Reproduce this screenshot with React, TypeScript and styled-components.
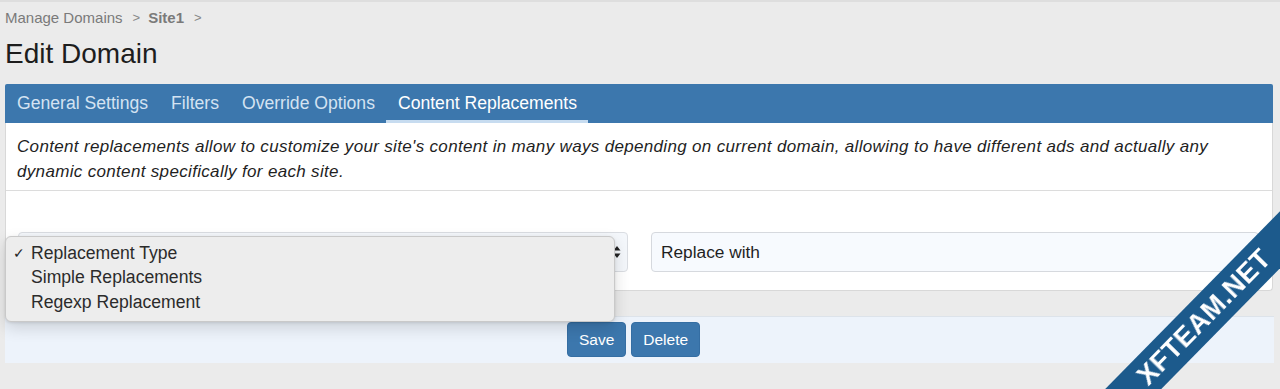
import React from 'react';
import styled, { createGlobalStyle } from 'styled-components';

const GlobalStyle = createGlobalStyle`
    html, body {
        margin: 0;
        padding: 0;
        background: #ebebeb;
        font-family: 'Liberation Sans', Arial, sans-serif;
        overflow: hidden;
    }
`;

/** Styled Components */
const Page = styled.div`
    border-top: 2px solid #dedede;
    padding: 0 7px 0 5px;
    height: 387px;
`;

const Breadcrumb = styled.div`
    display: flex;
    align-items: center;
    gap: 8px;
    padding-top: 5px;
    height: 20px;
    font-size: 15px;
    color: #7a7a7a;
`;

const Crumb = styled.span<{ $bold?: boolean }>`
    font-weight: ${(props) => (props.$bold ? 700 : 400)};
`;

const Chevron = styled.span`
    font-size: 13px;
    color: #888;
    padding-left: 2px;
`;

const Title = styled.h1`
    margin: 0;
    padding: 11px 0 15px;
    font-size: 28px;
    line-height: 31px;
    font-weight: 400;
    color: #1d1d1d;
`;

const TabBar = styled.div`
    display: flex;
    align-items: stretch;
    height: 39px;
    background: #3c77ad;
    border-radius: 2px 2px 0 0;
`;

const Tab = styled.div<{ $active?: boolean }>`
    display: flex;
    align-items: center;
    padding: 2px 11.5px 0;
    font-size: 17.6px;
    color: ${(props) => (props.$active ? '#ffffff' : '#d4e3f2')};
    border-bottom: 3px solid
        ${(props) => (props.$active ? '#c7dcf0' : 'transparent')};

    &:first-child {
        padding-left: 12px;
    }
`;

const Panel = styled.div`
    background: #fff;
    border: 1px solid #d8d8d8;
    border-top: none;
    border-radius: 0 0 4px 4px;
`;

const Description = styled.div`
    padding: 11px 11px 6px;
    font-size: 17px;
    letter-spacing: 0.33px;
    line-height: 25px;
    font-style: italic;
    color: #1f1f1f;
    border-bottom: 1px solid #dcdcdc;
`;

const FormRow = styled.div`
    display: grid;
    grid-template-columns: 610px 1fr;
    gap: 23px;
    padding: 41px 13px 18px 12px;
`;

const SelectWrap = styled.div`
    position: relative;
`;

const SelectBox = styled.div`
    height: 40px;
    box-sizing: border-box;
    border: 1px solid #dadde2;
    border-radius: 4px;
    background: #f4f7fb;
    display: flex;
    align-items: center;
    justify-content: flex-end;
    padding-right: 6px;
`;

const InputBox = styled.div`
    height: 40px;
    box-sizing: border-box;
    border: 1px solid #d6d9de;
    border-radius: 4px;
    background: #f7fafe;
    display: flex;
    align-items: center;
    padding-left: 9px;
    font-size: 17.3px;
    color: #1f1f1f;
`;

const Menu = styled.div`
    position: absolute;
    left: -13px;
    top: 4px;
    width: 610px;
    box-sizing: border-box;
    padding: 4px 0 6px;
    background: #ededed;
    border: 1px solid #c9c9c9;
    border-radius: 6px;
    box-shadow: 0 6px 16px rgba(0, 0, 0, 0.14), 0 1px 3px rgba(0, 0, 0, 0.1);
    z-index: 2;
`;

const MenuItem = styled.div`
    display: flex;
    align-items: center;
    height: 24.5px;
    font-size: 17.6px;
    color: #2b2b2b;
`;

const Check = styled.span`
    width: 25px;
    padding-left: 7px;
    box-sizing: border-box;
    font-size: 14px;
    color: #222;
`;

const Footer = styled.div`
    display: flex;
    justify-content: center;
    gap: 5px;
    margin-top: 25px;
    margin-right: -1px;
    padding: 5px 12px 6px 0;
    background: #edf3fb;
    border-top: 1px solid #dde3ea;
`;

const Button = styled.button`
    height: 35px;
    padding: 0 11px;
    border: 1px solid #356ea3;
    border-radius: 4px;
    background: #3c77ad;
    color: #fff;
    font-family: 'Liberation Sans', Arial, sans-serif;
    font-size: 15.5px;
`;

const Ribbon = styled.div`
    position: fixed;
    left: 994px;
    top: 297px;
    width: 420px;
    height: 40px;
    background: #1c5a8c;
    transform: rotate(-45.5deg);
    display: flex;
    align-items: center;
    justify-content: center;
    color: #fff;
    font-weight: 700;
    font-size: 27px;
    letter-spacing: 0.5px;
    z-index: 5;
`;

const SortArrows = () => (
    <svg width="8" height="14" viewBox="0 0 8 14">
        <path d="M4 1 L7.5 5.5 H0.5 Z" fill="#222" />
        <path d="M4 13 L7.5 8.5 H0.5 Z" fill="#222" />
    </svg>
);

const tabs = [
    'General Settings',
    'Filters',
    'Override Options',
    'Content Replacements',
];

const options = [
    { label: 'Replacement Type', checked: true },
    { label: 'Simple Replacements', checked: false },
    { label: 'Regexp Replacement', checked: false },
];

const App = () => {
    return (
        <>
            <GlobalStyle />
            <Page>
                <Breadcrumb>
                    <Crumb>Manage Domains</Crumb>
                    <Chevron>&gt;</Chevron>
                    <Crumb $bold>Site1</Crumb>
                    <Chevron>&gt;</Chevron>
                </Breadcrumb>
                <Title>Edit Domain</Title>
                <TabBar>
                    {tabs.map((t, i) => (
                        <Tab key={t} $active={i === tabs.length - 1}>
                            {t}
                        </Tab>
                    ))}
                </TabBar>
                <Panel>
                    <Description>
                        Content replacements allow to customize your site's
                        content in many ways depending on current domain,
                        allowing to have different ads and actually any
                        dynamic content specifically for each site.
                    </Description>
                    <FormRow>
                        <SelectWrap>
                            <SelectBox>
                                <SortArrows />
                            </SelectBox>
                            <Menu>
                                {options.map((o) => (
                                    <MenuItem key={o.label}>
                                        <Check>{o.checked ? '✓' : ''}</Check>
                                        {o.label}
                                    </MenuItem>
                                ))}
                            </Menu>
                        </SelectWrap>
                        <InputBox>Replace with</InputBox>
                    </FormRow>
                </Panel>
                <Footer>
                    <Button>Save</Button>
                    <Button>Delete</Button>
                </Footer>
            </Page>
            <Ribbon>XFTEAM.NET</Ribbon>
        </>
    );
};

export default App;
